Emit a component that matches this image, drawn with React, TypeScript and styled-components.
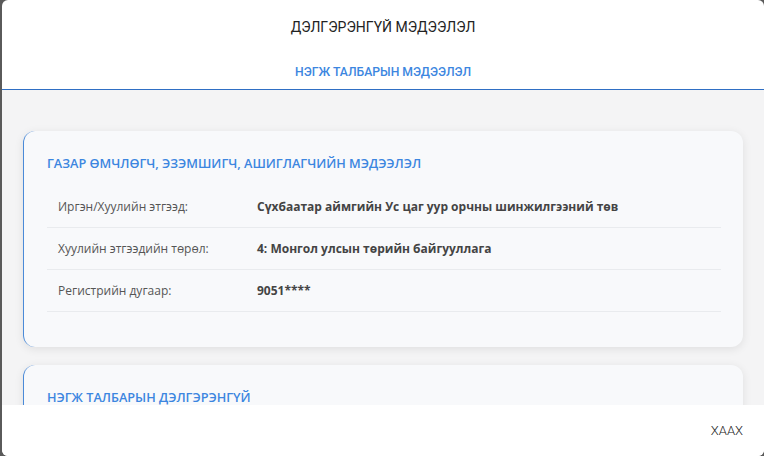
import React from "react";
import styled, { createGlobalStyle } from "styled-components";

const GlobalStyle = createGlobalStyle`
  html, body {
    margin: 0;
    padding: 0;
    background: #5a5a5a;
    overflow: hidden;
  }
  body {
    font-family: "Open Sans", "Liberation Sans", sans-serif;
  }
`;

const Backdrop = styled.div`
  width: 764px;
  height: 456px;
  padding-left: 2px;
  box-sizing: border-box;
  background: #5a5a5a;
`;

const Modal = styled.div`
  height: 100%;
  background: white;
  border-radius: 6px;
  display: flex;
  flex-direction: column;
  overflow: hidden;
`;

const Header = styled.div`
  display: flex;
  flex-direction: column;
  align-items: center;
  border-bottom: 1px solid #2f6fc4;
`;

const Title = styled.div`
  height: 54px;
  display: flex;
  align-items: center;
  font-family: Roboto, "Liberation Sans", sans-serif;
  font-size: 14px;
  color: #222;
`;

const Tab = styled.div`
  height: 35px;
  display: flex;
  align-items: center;
  font-family: Roboto, "Liberation Sans", sans-serif;
  font-size: 12.2px;
  font-weight: 500;
  color: #3c86e0;
`;

const Body = styled.div`
  flex: 1;
  overflow: hidden;
  background: #f4f4f5;
  padding: 41px 21px 0 21px;
  display: flex;
  flex-direction: column;
  gap: 18px;
`;

const Card = styled.div`
  background: #f8f9fb;
  border-radius: 12px;
  border-left: 1px solid #4a8ad8;
  box-shadow: 0 2px 10px rgba(0, 0, 0, 0.09);
  padding: 23px 22px 35px 23px;
  flex-shrink: 0;
`;

const CardTitle = styled.div`
  font-size: 12.7px;
  line-height: 18px;
  font-weight: 600;
  color: #3c86e0;
  margin-bottom: 14px;
`;

const Row = styled.div`
  display: grid;
  grid-template-columns: 199px 1fr;
  align-items: center;
  height: 41px;
  padding-left: 11px;
  border-bottom: 1px solid #e9ebee;
  font-size: 12px;
`;

const Label = styled.div`
  color: #555;
`;

const Value = styled.div`
  color: #444;
  font-weight: 700;
`;

const Footer = styled.div`
  height: 51px;
  display: flex;
  align-items: center;
  justify-content: flex-end;
  padding-right: 21px;
  background: white;
`;

const CloseButton = styled.button`
  border: 0;
  background: none;
  padding: 0;
  font-family: Roboto, "Liberation Sans", sans-serif;
  font-size: 13px;
  font-weight: 300;
  color: #222;
  cursor: pointer;
`;

const rows = [
  ["Иргэн/Хуулийн этгээд:", "Сүхбаатар аймгийн Ус цаг уур орчны шинжилгээний төв"],
  ["Хуулийн этгээдийн төрөл:", "4: Монгол улсын төрийн байгууллага"],
  ["Регистрийн дугаар:", "9051****"],
];

export default function App() {
  return (
    <>
      <GlobalStyle />
      <Backdrop>
        <Modal>
          <Header>
            <Title>ДЭЛГЭРЭНГҮЙ МЭДЭЭЛЭЛ</Title>
            <Tab>НЭГЖ ТАЛБАРЫН МЭДЭЭЛЭЛ</Tab>
          </Header>
          <Body>
            <Card>
              <CardTitle>ГАЗАР ӨМЧЛӨГЧ, ЭЗЭМШИГЧ, АШИГЛАГЧИЙН МЭДЭЭЛЭЛ</CardTitle>
              {rows.map(([label, value]) => (
                <Row key={label}>
                  <Label>{label}</Label>
                  <Value>{value}</Value>
                </Row>
              ))}
            </Card>
            <Card>
              <CardTitle>НЭГЖ ТАЛБАРЫН ДЭЛГЭРЭНГҮЙ</CardTitle>
            </Card>
          </Body>
          <Footer>
            <CloseButton>ХААХ</CloseButton>
          </Footer>
        </Modal>
      </Backdrop>
    </>
  );
}
